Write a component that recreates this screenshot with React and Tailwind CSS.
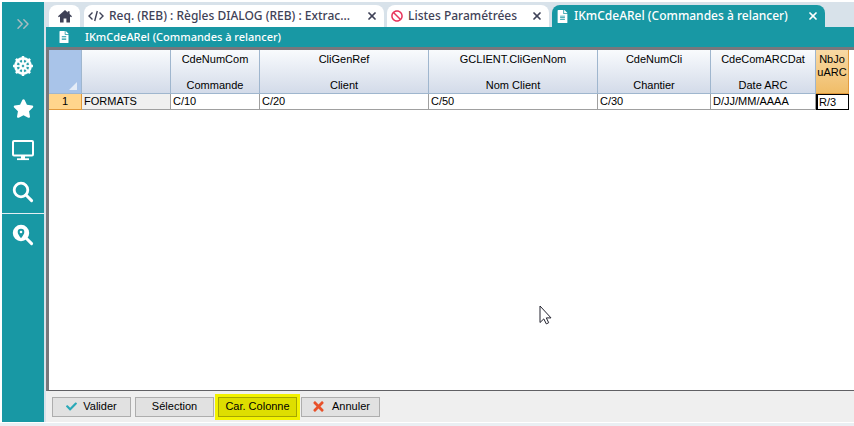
import { FaBan, FaCheck, FaDharmachakra, FaFileAlt, FaStar, FaTimes } from 'react-icons/fa';
import { ChevronsRight, X } from 'lucide-react';

const COLUMNS = [
  { field: 'CdeNumCom', label: 'Commande', format: 'C/10', width: 'w-[89px]' },
  { field: 'CliGenRef', label: 'Client', format: 'C/20', width: 'w-[169px]' },
  { field: 'GCLIENT.CliGenNom', label: 'Nom Client', format: 'C/50', width: 'w-[169px]' },
  { field: 'CdeNumCli', label: 'Chantier', format: 'C/30', width: 'w-[113px]' },
  { field: 'CdeComARCDat', label: 'Date ARC', format: 'D/JJ/MM/AAAA', width: 'w-[105px]' },
];

function HomeIcon() {
  return (
    <svg viewBox="0 0 14 13" className="h-[13px] w-3.5" fill="currentColor">
      <path d="M7 0 0 6.3l.8.9L2 6.4V12.4h3.6V8.6h2.8v3.8H12V6.4l1.2.8.8-.9-2.4-2.2V1.2h-1.8v1.3z" />
    </svg>
  );
}

function CodeIcon() {
  return (
    <svg viewBox="0 0 16 12" className="h-3 w-4 shrink-0" fill="none" stroke="#3f4257" strokeWidth="1.4">
      <path d="M4.5 2.5 1 6l3.5 3.5M11.5 2.5 15 6l-3.5 3.5M9.3 1 6.7 11" />
    </svg>
  );
}

function ScreenIcon() {
  return (
    <svg viewBox="0 0 24 22" className="h-[22px] w-6" fill="none" stroke="currentColor">
      <rect x="2" y="2" width="20" height="14.5" rx="1" strokeWidth="2" />
      <path d="M12 16v4" strokeWidth="4" />
      <path d="M6 20.2h12" strokeWidth="1.8" />
    </svg>
  );
}

function SearchIcon({ pin }) {
  return (
    <svg viewBox="0 0 22 22" className="h-[22px] w-[22px]" fill="none" stroke="currentColor">
      <circle cx="9" cy="9" r="6.8" strokeWidth="2.8" fill={pin ? 'currentColor' : 'none'} />
      <path d="m14 14 5.6 5.6" strokeWidth="3" strokeLinecap="round" />
      {pin && (
        <>
          <path d="M9 14.2C7 11.6 5.7 10 5.7 8a3.3 3.3 0 0 1 6.6 0c0 2-1.3 3.6-3.3 6.2z" fill="#1898a4" stroke="none" />
          <circle cx="9" cy="8" r="1.3" fill="currentColor" stroke="none" />
        </>
      )}
    </svg>
  );
}

function Pointer() {
  return (
    <svg viewBox="0 0 13 20" className="absolute left-[490px] top-[255px] h-5 w-[13px]" fill="#fff" stroke="#22222e">
      <path d="M1 1v16.5l3.8-3.6 2.5 5 2.4-1.2-2.4-4.8H12z" />
    </svg>
  );
}

function Sidebar() {
  return (
    <nav className="flex w-[42px] shrink-0 flex-col items-center bg-[#1898a4] pt-px text-white">
      <button type="button" aria-label="Déplier" className="flex h-[42px] items-center text-[#a9bcc0]">
        <ChevronsRight size={20} strokeWidth={1.8} />
      </button>
      <button type="button" aria-label="Navigation" className="flex h-[42px] items-center">
        <FaDharmachakra size={20} stroke="currentColor" strokeWidth={5} />
      </button>
      <button type="button" aria-label="Favoris" className="flex h-[42px] items-center">
        <FaStar size={21} />
      </button>
      <button type="button" aria-label="Bureau" className="flex h-[42px] items-center">
        <ScreenIcon />
      </button>
      <button type="button" aria-label="Rechercher" className="flex h-[42px] items-center">
        <SearchIcon />
      </button>
      <div className="h-px w-full bg-[#e4eef2]" />
      <button type="button" aria-label="Localiser" className="flex h-[42px] items-center">
        <SearchIcon pin />
      </button>
    </nav>
  );
}

function Tab({ icon, title, active, width }) {
  return (
    <div
      className={`flex h-[22px] items-center rounded-t-lg pl-1 pr-1.5 text-xs font-medium ${width} ${
        active ? 'bg-[#1898a4] text-white' : 'bg-white text-[#3f4257]'
      }`}
    >
      <button type="button" className="flex min-w-0 flex-1 items-center gap-[5px]">
        {icon}
        <span className="truncate">{title}</span>
      </button>
      <button type="button" aria-label="Fermer" className="shrink-0">
        <X size={12} strokeWidth={3.5} />
      </button>
    </div>
  );
}

function TabBar() {
  return (
    <div className="flex items-end gap-[3px] bg-[#d8e2ea] pl-[5px] pt-[3px] font-['Noto_Sans',sans-serif]">
      <button
        type="button"
        aria-label="Accueil"
        className="mr-px flex h-[22px] w-[31px] items-center justify-center rounded-t-lg bg-white text-[#3f4257]"
      >
        <HomeIcon />
      </button>
      <Tab icon={<CodeIcon />} title="Req. (REB) : Règles DIALOG (REB) : Extrac..." width="w-[300px]" />
      <Tab icon={<FaBan size={12} className="shrink-0 text-[#e8365d]" />} title="Listes Paramétrées" width="w-[162px]" />
      <Tab
        icon={<FaFileAlt size={13} className="shrink-0" />}
        title="IKmCdeARel (Commandes à relancer)"
        width="w-[273px]"
        active
      />
    </div>
  );
}

function FormatGrid() {
  const head = 'h-[44px] border-b border-r border-[#9fb6ce] bg-linear-to-b from-[#f9fbfd] to-[#d3dbe9] p-0 align-top font-normal';
  const cell = 'h-4 border-b border-r border-[#a0a0a0] px-0.5 py-0';

  return (
    <table className="w-[800px] table-fixed border-separate border-spacing-0 text-[11px] leading-[13px]">
      <thead>
        <tr>
          <th className="w-[33px] border-b border-r border-[#9fb6ce] bg-[#a9c4e9] p-0 pr-1 pb-[3px] align-bottom">
            <svg viewBox="0 0 8 8" className="ml-auto h-2 w-2" fill="#e4ecf7">
              <path d="M8 0v8H0z" />
            </svg>
          </th>
          <th className={`${head} w-[89px]`} />
          {COLUMNS.map((col) => (
            <th key={col.field} className={`${head} ${col.width}`}>
              <div className="flex h-[43px] flex-col justify-between pb-px pt-[3px]">
                <span>{col.field}</span>
                <span>{col.label}</span>
              </div>
            </th>
          ))}
          <th className="w-[33px] border-b border-r border-[#e29a3c] bg-linear-to-b from-[#f8d9a4] to-[#f0bd68] p-0 pt-[3px] align-top font-normal">
            NbJo
            <br />
            uARC
          </th>
        </tr>
      </thead>
      <tbody>
        <tr>
          <th className="h-4 border-b border-r border-[#e29a3c] bg-[#ffd58c] p-0 font-normal">1</th>
          <td className={`${cell} bg-[#f0f0f0]`}>FORMATS</td>
          {COLUMNS.map((col) => (
            <td key={col.field} className={cell}>
              {col.format}
            </td>
          ))}
          <td className="h-4 p-0">
            <input
              type="text"
              aria-label="NbJouARC"
              defaultValue="R/3"
              className="block h-4 w-full border border-l-2 border-black bg-white px-px pb-px leading-3 outline-none"
            />
          </td>
        </tr>
      </tbody>
    </table>
  );
}

function ActionButton({ icon, children, highlight }) {
  return (
    <button
      type="button"
      className={`flex h-5 w-[79px] items-center justify-center gap-1.5 border ${
        highlight ? 'border-[#a5a600] bg-[#dede00] outline-3 outline-[#f2f200]' : 'border-[#adadad] bg-[#e1e1e1]'
      }`}
    >
      {icon}
      {children}
    </button>
  );
}

export default function App() {
  return (
    <div className="flex min-h-screen flex-col bg-[#eaeff3] font-['Liberation_Sans',Arial,sans-serif] text-[11px] text-black">
      <div className="flex flex-1 border-l-2 border-t-2 border-white bg-[#d8e2ea]">
        <Sidebar />
        <div className="flex min-w-0 flex-1 flex-col">
          <TabBar />
          <div className="ml-0.5 flex h-5 items-center gap-[15px] bg-[#1898a4] pl-3 font-['Noto_Sans',sans-serif] text-[11px] font-medium text-white">
            <FaFileAlt size={12} />
            <span>IKmCdeARel (Commandes à relancer)</span>
          </div>
          <main className="relative ml-0.5 flex-1 overflow-hidden border-b border-l-3 border-t-3 border-[#77777c] border-b-[#606064] bg-white">
            <FormatGrid />
            <Pointer />
          </main>
          <footer className="ml-0.5 flex h-[31px] items-center gap-1 bg-[#efefef] pl-1.5">
            <ActionButton icon={<FaCheck size={11} className="text-[#2aa9b8]" />}>Valider</ActionButton>
            <ActionButton>Sélection</ActionButton>
            <ActionButton highlight>Car. Colonne</ActionButton>
            <ActionButton icon={<FaTimes size={15} className="text-[#e8512a]" />}>Annuler</ActionButton>
          </footer>
        </div>
      </div>
      <div className="h-1 border-t border-white" />
    </div>
  );
}
